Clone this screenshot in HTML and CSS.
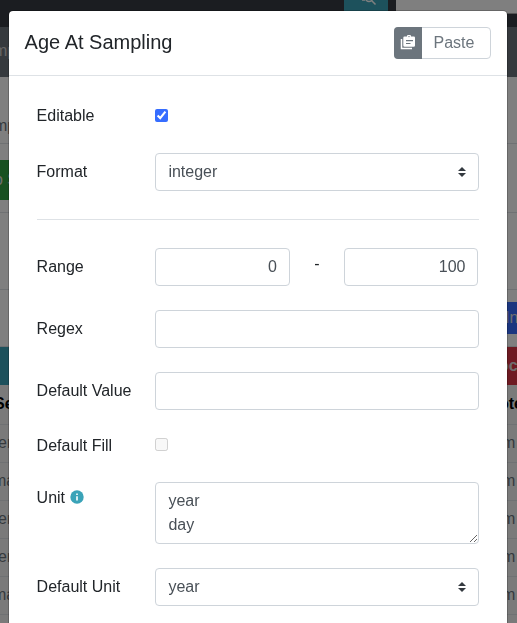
FILE: index.html
```
<!DOCTYPE html>
<html lang="en">
<head>
<meta charset="utf-8">
<title>Age At Sampling</title>
<link rel="stylesheet" href="styles.css">
</head>
<body>
<div class="page">
  <div class="topbar"><div class="search-btn"><svg width="16" height="16" viewBox="0 0 16 16" fill="none" stroke="#fff" stroke-width="1.5"><circle cx="8" cy="7" r="3.5"/><path d="M10.500 9.500l4 4M1 6h3M1 9h3"/></svg></div><div class="search-box"></div></div>
  <div class="band"><span>mp</span></div>
  <div class="line crumbs"><span>mp</span></div>
  <div class="line tools"><div class="green">o S</div></div>
  <div class="line blank"></div>
  <div class="line actions"><div class="blue">In</div></div>
  <div class="heads"><div class="teal"></div><div class="red">oc</div></div>
  <div class="trow bold"><span>Se</span><span class="end">ote</span></div>
  <div class="trow"><span>er</span><span class="end">m</span></div>
  <div class="trow"><span class="wide">ma</span><span class="end">m</span></div>
  <div class="trow"><span>er</span><span class="end">m</span></div>
  <div class="trow"><span>er</span><span class="end">m</span></div>
  <div class="trow"><span class="wide">ma</span><span class="end">m</span></div>
  <div class="trow"></div>
</div>
<div class="backdrop">
  <div class="modal">
    <header class="modal-header">
      <h5>Age At Sampling</h5>
      <div class="paste">
        <div class="paste-icon"><svg width="16" height="16" viewBox="0 0 16 16"><path d="M1.500 4v9.500H12" fill="none" stroke="#fff" stroke-width="1.500"/><path fill="#fff" fill-rule="evenodd" d="M4.500 1.500H7a2 2 0 0 1 4 0h2.500A1.300 1.300 0 0 1 15 2.800v7.700a1.300 1.300 0 0 1-1.300 1.300H4.600a1.300 1.300 0 0 1-1.300-1.300V2.800A1.300 1.300 0 0 1 4.500 1.500zM9 .9a.7.7 0 1 0 0 1.400.7.7 0 0 0 0-1.400zM6 5v1.200h7V5zM6 7.900v1.200h4.500V7.900z"/></svg></div>
        <div class="paste-label">Paste</div>
      </div>
    </header>
    <div class="modal-body">
      <div class="row check-row"><label>Editable</label><input type="checkbox" checked></div>
      <div class="row format"><label>Format</label><div class="control select"><span>integer</span><svg width="8" height="10" viewBox="0 0 8 10"><path fill="#343a40" d="M4 0L0 4h8zM4 10L0 6h8z"/></svg></div></div>
      <hr>
      <div class="row"><label>Range</label><div class="range"><div class="control num">0</div><span class="dash">-</span><div class="control num">100</div></div></div>
      <div class="row"><label>Regex</label><div class="control"></div></div>
      <div class="row"><label>Default Value</label><div class="control"></div></div>
      <div class="row fill-row"><label>Default Fill</label><input type="checkbox" disabled></div>
      <div class="row unit-row"><label>Unit <svg class="info" width="14" height="14" viewBox="0 0 14 14"><circle cx="7" cy="7" r="6.700" fill="#3aa3b8"/><path fill="#fff" d="M6.200 3.500h1.600v1.600H6.200zM6.200 6.200h1.600v4.300H6.200z"/></svg></label><textarea class="control">year
day</textarea></div>
      <div class="row"><label>Default Unit</label><div class="control select"><span>year</span><svg width="8" height="10" viewBox="0 0 8 10"><path fill="#343a40" d="M4 0L0 4h8zM4 10L0 6h8z"/></svg></div></div>
    </div>
  </div>
</div>
</body>
</html>
```
FILE: styles.css
```
* { box-sizing: border-box; }
html, body { margin: 0; height: 100%; overflow: hidden; }
body { font: 16px/24px "Liberation Sans", Arial, sans-serif; color: #212529; background: #fff; }
svg { display: block; }
.page { height: 623px; overflow: hidden; white-space: nowrap; }
.topbar { height: 27px; background: #363a42; display: flex; justify-content: flex-end; align-items: flex-start; }
.search-btn { width: 44px; height: 27px; margin-right: 8px; background: #3aa3b8; display: flex; justify-content: center; }
.search-btn svg { margin-top: -9px; margin-left: 6px; }
.search-box { width: 121px; height: 14px; background: #fff; border-bottom: 1px solid #aaa; }
.band { height: 50px; background: #6c757d; color: #ccc; padding-top: 12px; }
.band span, .crumbs span { margin-left: -6px; }
.line { border-bottom: 1px solid #dee2e6; }
.crumbs { height: 67px; padding-top: 37px; color: #6c757d; }
.tools { height: 69px; padding-top: 16px; }
.green { width: 40px; height: 40px; background: #30a343; color: #ddd; line-height: 40px; text-indent: -6px; }
.blank { height: 77px; }
.actions { height: 57px; padding-top: 12px; display: flex; justify-content: flex-end; }
.blue { width: 17px; height: 32px; background: #366dff; color: #ddd; line-height: 32px; overflow: hidden; text-indent: 5px; }
.heads { display: flex; justify-content: space-between; height: 38px; }
.teal { width: 100px; background: #3aa3b8; }
.red { width: 17px; background: #dc3545; color: #ddd; font-weight: bold; line-height: 38px; overflow: hidden; text-indent: -1px; }
.trow { height: 38px; padding-top: 6px; border-bottom: 1px solid #dee2e6; background: #f4f4f4; color: #6c757d; display: flex; justify-content: space-between; }
.trow span { margin-left: -2px; }
.trow .wide { margin-left: -7px; }
.trow .end { width: 17px; margin: 0; text-indent: 2px; overflow: hidden; }
.trow.bold { height: 40px; padding-top: 7px; font-weight: bold; color: #000; }
.trow.bold span { margin-left: -6px; }
.trow.bold .end { margin: 0; text-indent: -1px; }
.backdrop { position: fixed; inset: 0; background: rgba(0,0,0,.5); overflow: hidden; padding: 10px 8px 0; }
.modal { width: 500px; height: 640px; background: #fff; background-clip: padding-box; border: 1px solid rgba(0,0,0,.2); border-radius: 5px; }
.modal-header { height: 65px; padding: 0 16px 0 15.6px; display: flex; align-items: center; justify-content: space-between; border-bottom: 1px solid #dee2e6; }
h5 { font-size: 20px; line-height: 30px; font-weight: 400; margin: 0 0 2px; }
.paste { display: flex; width: 97px; height: 32px; border: 1px solid #ced4da; border-radius: 4px; color: #6c757d; }
.paste-icon { width: 28px; margin: -1px 0 -1px -1px; background: #6c757d; border-radius: 4px 0 0 4px; display: flex; align-items: center; justify-content: center; }
.paste-label { line-height: 30px; padding-left: 11.5px; }
.modal-body { padding: 24px 28px 0 27.6px; }
.row { display: grid; grid-template-columns: 118.8px 323.6px; height: 38px; margin-bottom: 24px; }
.row label { line-height: 38px; white-space: nowrap; }
.check-row { height: 29px; }
.check-row label { line-height: 32px; }
.row.format { margin-bottom: 28px; }
.row input { width: 13px; height: 13px; margin: 0; accent-color: #366dff; }
.check-row input { margin-top: 9px; }
hr { margin: 0 0 28px; border: 0; border-top: 1px solid #dee2e6; }
.control { height: 38px; border: 1px solid #ced4da; border-radius: 4px; padding: 6px 12px; color: #495057; background: #fff; }
.select { display: flex; align-items: center; justify-content: space-between; }
.range { display: grid; grid-template-columns: 134.6px 54px 134px; }
.num { text-align: right; }
.num:last-child { padding-right: 11.5px; }
.dash { text-align: center; line-height: 32px; }
.fill-row { height: 24px; }
.fill-row label { line-height: 24px; }
.fill-row input { margin-top: 4px; }
.row.unit-row { height: 62px; }
.unit-row label { display: flex; height: 30px; line-height: 32px; gap: 5px; align-items: flex-start; }
.info { margin-top: 8px; }
textarea.control { width: 323.6px; height: 62px; margin: 0; font: inherit; overflow: hidden; resize: both; display: block; }
```
